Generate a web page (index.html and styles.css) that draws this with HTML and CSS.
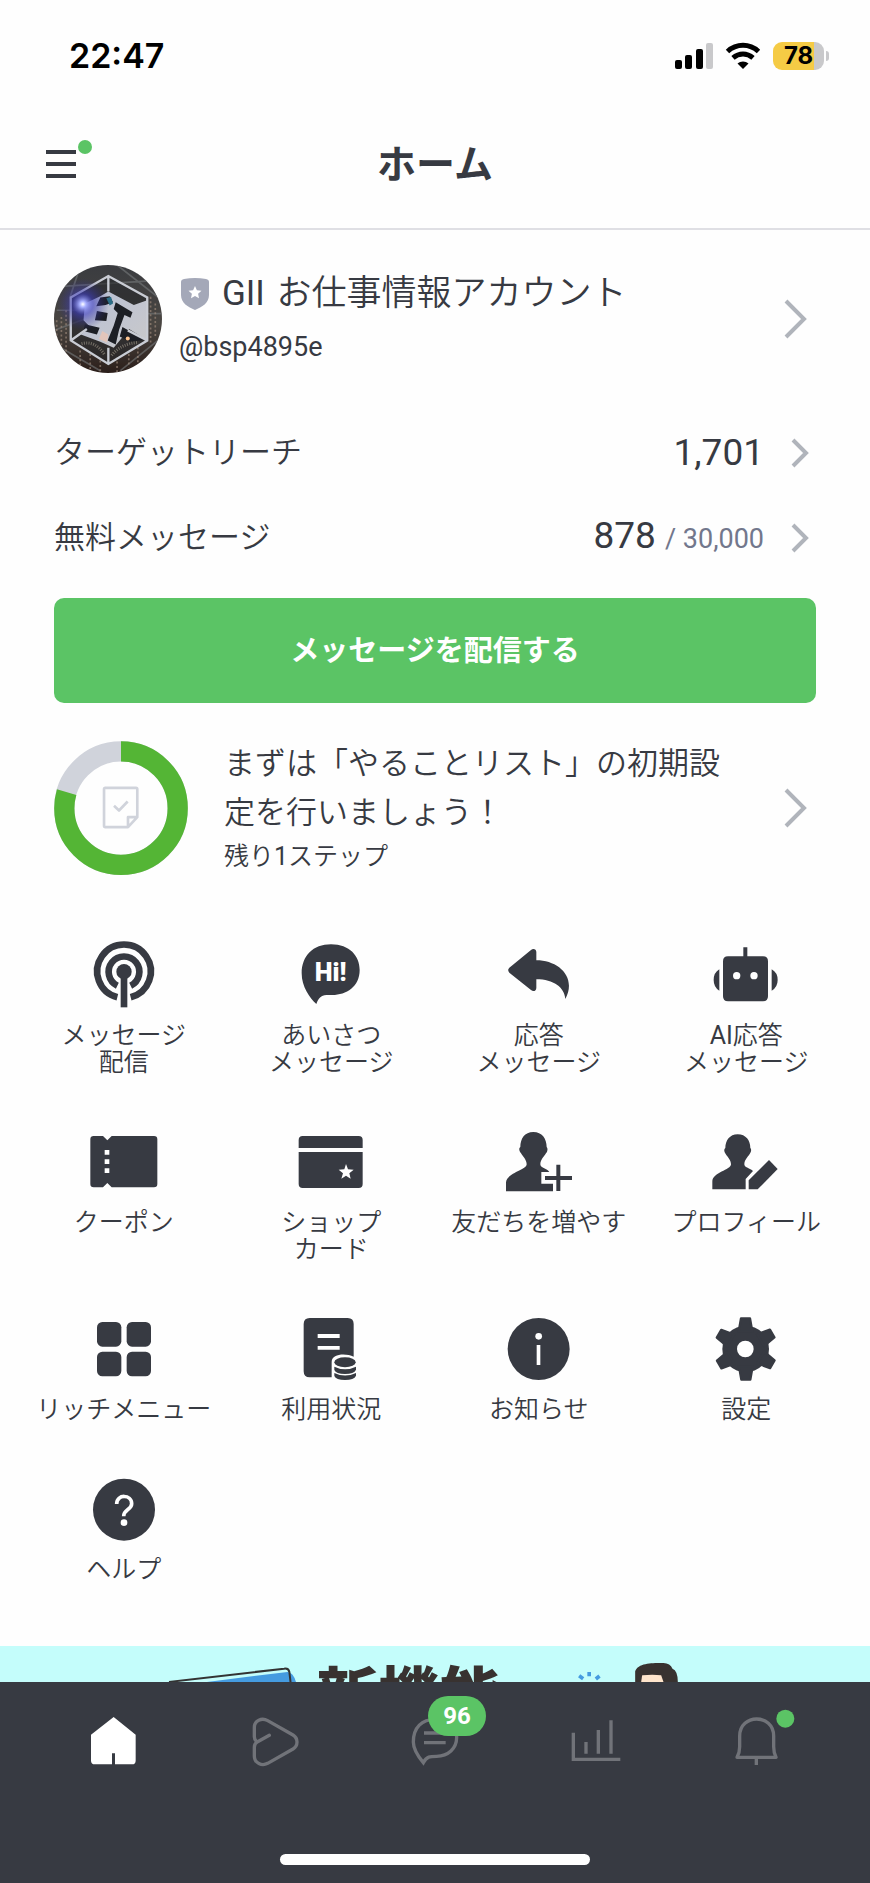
FILE: index.html
```html
<!DOCTYPE html>
<html lang="ja">
<head>
<meta charset="utf-8">
<meta name="viewport" content="width=device-width, initial-scale=1">
<title>ホーム</title>
<link rel="stylesheet" href="styles.css">
</head>
<body>
<div class="app">
  <div class="status">
    <time class="status-time">22:47</time>
    <div class="status-icons">
      <svg class="signal" viewBox="0 0 38 26" aria-label="電波"><rect x="0" y="17" width="7" height="9" rx="2"/><rect x="10" y="12" width="7" height="14" rx="2"/><rect x="21" y="6" width="7" height="20" rx="2"/><rect class="off" x="31" y="0" width="7" height="26" rx="2"/></svg>
      <svg class="wifi" viewBox="0 0 36 26" aria-label="Wi-Fi"><path d="M2.500 8.500C11.500 .3 24.500 .3 33.500 8.500M8 14.800C14 9.600 22 9.600 28 14.800"/><path class="solid" d="M18 26L12.500 20.500C15.500 17.800 20.500 17.800 23.500 20.500Z"/></svg>
      <span class="battery"><span class="battery-body">78</span><span class="battery-tip"></span></span>
    </div>
  </div>

  <header class="header">
    <button class="menu" type="button" aria-label="メニュー">
      <svg viewBox="0 0 48 44"><path class="bars" d="M0 9h30M0 21h30M0 33h30"/><circle class="dot" cx="39" cy="4" r="7"/></svg>
    </button>
    <h1 class="title">ホーム</h1>
  </header>

  <main class="main">
    <a class="profile" href="#account">
      <svg class="avatar" viewBox="12 15 322 322" aria-hidden="true">
        <defs>
          <clipPath id="round"><circle cx="173" cy="176" r="161"/></clipPath>
          <linearGradient id="city" x1="0" y1="0" x2="0" y2="1"><stop offset="0" stop-color="#3a3c40"/><stop offset=".55" stop-color="#4a4642"/><stop offset="1" stop-color="#2c1f1b"/></linearGradient>
          <radialGradient id="flare"><stop offset="0" stop-color="#fff"/><stop offset=".12" stop-color="#a8b0ff"/><stop offset=".4" stop-color="#3f3ec0" stop-opacity=".6"/><stop offset="1" stop-color="#2c2a80" stop-opacity="0"/></radialGradient>
          <linearGradient id="metal" x1="0" y1="0" x2="1" y2="1"><stop offset="0" stop-color="#b9c0d6"/><stop offset="1" stop-color="#c9c9ca"/></linearGradient>
        </defs>
        <g clip-path="url(#round)">
          <rect x="12" y="15" width="322" height="322" fill="url(#city)"/>
          <path d="M12 80L334 60M12 210L120 170M200 15L334 120M12 250L150 330M210 330L334 230M20 150H80M290 160H334M90 20L60 110M250 30L330 90" stroke="#77797b" stroke-width="5" fill="none" opacity=".6"/>
          <path d="M20 180V240M34 170V260M48 150V280M300 110V250M314 130V230M120 280V337M150 300V337M200 290V337M235 280V320M262 260V310M90 270V320" stroke="#9a8678" stroke-width="5" stroke-dasharray="6 7" opacity=".7"/>
          <path d="M62 112L174 48L290 112L290 240L174 310L62 240Z" fill="#26282c" opacity=".6"/>
          <path d="M104 130L150 108L174 94L250 134L290 120V240L236 206L208 240L190 262L150 244L92 222L120 200L100 180Z" fill="url(#metal)"/>
          <path d="M196 126L246 156L240 172L222 164L206 208L196 252L172 240L190 196L202 158L190 146ZM140 152L172 158L168 182L134 180ZM150 112L178 108L188 126L166 134L138 138ZM104 192L148 202L140 222L100 212ZM216 200L284 238L240 244L208 228Z" fill="#1d1f25"/>
          <path d="M156 212L174 222L170 246L146 236Z" fill="#e2c5bb"/>
          <path d="M168 114L182 110L188 130L178 136Z" fill="#2c6d86"/>
          <path d="M62 112L174 48L290 112L290 240L174 310L62 240ZM174 48V94M174 262V310M62 240L110 206M290 240L232 210" fill="none" stroke="#c9ccd4" stroke-width="7"/>
          <path d="M94 250Q134 238 164 284M184 284Q214 248 264 246" fill="none" stroke="#757067" stroke-width="9" stroke-dasharray="3 4"/>
          <circle cx="98" cy="132" r="78" fill="url(#flare)"/>
          <circle cx="232" cy="234" r="6" fill="#ffc692"/>
        </g>
      </svg>
      <span class="profile-text">
        <span class="profile-name">
          <svg class="shield" viewBox="0 0 28 32" aria-label="認証バッジ"><path fill="#a4a8b8" d="M3 1Q14-1 25 1Q28 1.500 28 4V17C28 25 21 29 14 32C7 29 0 25 0 17V4Q0 1.500 3 1Z"/><path fill="#fff" d="M14 8l1.900 4.200 4.600.5-3.400 3.100.9 4.500-4-2.300-4 2.300.9-4.500-3.400-3.100 4.600-.5Z"/></svg>
          <span>GII <span class="kana name-kana">お仕事情報アカウント</span></span>
        </span>
        <span class="profile-id">@bsp4895e</span>
      </span>
      <svg class="chevron" viewBox="0 0 24 40" aria-hidden="true"><path d="M2 2L20 20L2 38"/></svg>
    </a>

    <a class="stat" href="#reach"><span class="stat-label kana">ターゲットリーチ</span><span class="stat-value">1,701</span><svg class="chevron-small" viewBox="0 0 18 30" aria-hidden="true"><path d="M2 2L15 15L2 28"/></svg></a>
    <a class="stat" href="#messages"><span class="stat-label kana">無料メッセージ</span><span class="stat-value">878 <span class="stat-limit">/ 30,000</span></span><svg class="chevron-small" viewBox="0 0 18 30" aria-hidden="true"><path d="M2 2L15 15L2 28"/></svg></a>

    <button class="send" type="button">メッセージを配信する</button>

    <a class="setup" href="#todo">
      <svg class="ring" viewBox="70 451 402 403" aria-hidden="true">
        <circle cx="271" cy="653" r="170.500" fill="none" stroke="#d0d3db" stroke-width="61"/>
        <circle cx="271" cy="653" r="170.500" fill="none" stroke="#54b535" stroke-width="61" pathLength="100" stroke-dasharray="79.500 100" transform="rotate(-90 271 653)"/>
        <path d="M224 592H316Q320 592 320 596V680L292 710H224Q220 710 220 706V596Q220 592 224 592ZM292 710V680H320M250 646L265 660L291 633" fill="none" stroke="#d0d3db" stroke-width="8" stroke-linejoin="round"/>
      </svg>
      <span class="setup-text kana"><span class="setup-title">まずは「やることリスト」の初期設定を行いましょう！</span><span class="setup-rest">残り<span class="latin">1</span>ステップ</span></span>
      <svg class="chevron" viewBox="0 0 24 40" aria-hidden="true"><path d="M2 2L20 20L2 38"/></svg>
    </a>

    <nav class="grid kana" aria-label="機能">
      <a class="tile" href="#broadcast">
        <svg viewBox="203 54 216 216"><g fill="none" stroke="#373a42"><path stroke-width="20" d="M291 232A80.500 80.500 0 1 1 331 232"/><path stroke-width="20" d="M291 197A46 46 0 1 1 331 197"/><path stroke-width="20" d="M311 155V262"/></g><circle cx="311" cy="155" r="23"/></svg>
        <span>メッセージ<br>配信</span></a>
      <a class="tile" href="#greeting">
        <svg viewBox="826 54 216 216"><path d="M934 73C990 73 1020 108 1020 150C1020 200 980 225 938 225H920C904 225 896 236 890 252C870 234 846 200 846 160C846 108 880 73 934 73Z"/><text class="hi" x="933" y="182" text-anchor="middle">Hi!</text></svg>
        <span>あいさつ<br>メッセージ</span></a>
      <a class="tile" href="#reply">
        <svg viewBox="218 54 216 216"><path d="M302 90C309 84 318 88 318 96V121C385 121 440 172 405 237C402 202 370 178 318 178V203C318 213 309 216 302 210L237 158Q230 150 237 143Z"/></svg>
        <span>応答<br>メッセージ</span></a>
      <a class="tile" href="#ai">
        <svg viewBox="841 54 216 216"><path d="M941 82H953V109H1000Q1015 109 1015 124V229Q1015 244 1000 244H895Q880 244 880 229V124Q880 109 895 109H941ZM869 148Q852 158 852 180T869 212ZM1026 148Q1044 158 1044 180T1026 212Z"/><g fill="#fff"><circle cx="921" cy="167" r="11"/><circle cx="973" cy="167" r="11"/></g></svg>
        <span><span class="latin">AI</span>応答<br>メッセージ</span></a>
      <a class="tile" href="#coupon">
        <svg viewBox="203 615 216 216"><path d="M220 648H248L261 661L274 648H401Q411 648 411 658V792Q411 802 401 802H274L261 789L248 802H220Q210 802 210 792V658Q210 648 220 648Z"/><path fill="#fff" d="M253 690h14v14h-14zM253 718h14v14h-14zM253 745h14v14h-14z"/></svg>
        <span>クーポン</span></a>
      <a class="tile" href="#card">
        <svg viewBox="826 615 216 216"><path d="M837 684V660Q837 648 849 648H1017Q1029 648 1029 660V684ZM837 696H1029V792Q1029 804 1017 804H849Q837 804 837 792Z"/><path fill="#fff" d="M979 732L985 748L1002 749L989 760L993 776L979 767L965 776L970 760L957 749L974 748Z"/></svg>
        <span>ショップ<br>カード</span></a>
      <a class="tile" href="#friends">
        <svg viewBox="218 615 216 216"><path d="M309 636C335 636 349 656 349 681C353 684 352 694 347 700C341 709 330 720 330 733C330 744 348 744 357 756H333V791H368V814H227V788C227 760 289 750 289 733C289 720 278 709 272 700C266 694 265 684 270 681C270 656 283 636 309 636Z"/><path d="M378 734h12v34h35v12h-35v33h-12v-33h-34v-12h34z"/></svg>
        <span>友だちを増やす</span></a>
      <a class="tile" href="#profile">
        <svg viewBox="841 615 216 216"><path d="M924 643C949 643 962 662 962 684C966 687 965 696 960 702C954 711 944 720 944 733C944 743 958 743 970 753L948 777V808H848V784C848 758 904 750 904 733C904 720 894 711 888 702C883 696 882 687 887 684C887 662 900 643 924 643Z"/><path d="M1018 720L1044 747L984 808H957V781Z"/></svg>
        <span>プロフィール</span></a>
      <a class="tile" href="#richmenu">
        <svg viewBox="203 66 216 216"><rect x="230" y="96" width="73" height="74" rx="16"/><rect x="319" y="96" width="73" height="74" rx="16"/><rect x="230" y="185" width="73" height="74" rx="16"/><rect x="319" y="185" width="73" height="74" rx="16"/></svg>
        <span>リッチメニュー</span></a>
      <a class="tile" href="#usage">
        <svg viewBox="826 66 216 216"><path d="M870 84H984Q1002 84 1002 102V200C980 190 936 190 936 216V262H870Q852 262 852 244V102Q852 84 870 84Z"/><path fill="#fff" d="M894 132h66v12h-66zM894 168h66v11h-66z"/><ellipse cx="976" cy="217" rx="32" ry="15"/><path d="M944 230Q976 246 1009 230V239Q1003 252 976 252T944 240ZM944 249Q976 264 1009 249V257Q1003 270 976 270T944 258Z"/></svg>
        <span>利用状況</span></a>
      <a class="tile" href="#news">
        <svg viewBox="218 66 216 216"><circle cx="325" cy="177" r="93"/><g fill="#fff"><circle cx="325" cy="139" r="10"/><path d="M319 165h11v60h-11z"/></g></svg>
        <span>お知らせ</span></a>
      <a class="tile" href="#settings">
        <svg viewBox="841 66 216 216"><circle cx="948" cy="177" r="70"/><g stroke="#373a42" stroke-width="7" stroke-linejoin="round"><path id="tooth" d="M934 85H961L968 125H927Z"/><use href="#tooth" transform="rotate(60 948 177)"/><use href="#tooth" transform="rotate(120 948 177)"/><use href="#tooth" transform="rotate(180 948 177)"/><use href="#tooth" transform="rotate(240 948 177)"/><use href="#tooth" transform="rotate(300 948 177)"/></g><circle cx="947" cy="177" r="25" fill="#fff"/></svg>
        <span>設定</span></a>
      <a class="tile" href="#help">
        <svg viewBox="203 546 216 216"><circle cx="311" cy="659" r="93"/><path d="M289 642C289 611 334 613 334 641C334 660 310 657 310 679" fill="none" stroke="#fff" stroke-width="11"/><circle cx="311" cy="698" r="10" fill="#fff"/></svg>
        <span>ヘルプ</span></a>
    </nav>
  </main>

  <a class="banner" href="#new">
    <svg class="banner-art banner-card" viewBox="500 48 400 108" aria-hidden="true"><path fill="#459be0" d="M620 156L862 126Q880 128 888 156Z"/><path d="M506 156L852 116Q866 114 868 126L872 160" fill="none" stroke="#333" stroke-width="6"/></svg>
    <span class="banner-text">新機能</span>
    <svg class="banner-art banner-person" viewBox="420 48 320 108" aria-hidden="true"><path d="M429 137l12 9M459 126v13M490 138l-11 9" stroke="#459be0" stroke-width="11" fill="none"/><path fill="#383230" d="M597 156V124C606 98 650 99 682 99Q702 100 709 116Q725 122 725 156Z"/><path fill="#ffe5cc" d="M615 156L618 136Q650 132 675 136L682 156Z"/></svg>
  </a>

  <footer class="footer">
    <nav class="tabs" aria-label="タブ">
      <a class="tab" href="#home" aria-label="ホーム" aria-current="page"><svg viewBox="250 243 180 180"><path fill="#fff" d="M342 261L408 314V392Q408 403 397 403H346V370H337V403H286Q274 403 274 392V314Z"/></svg></a>
      <a class="tab" href="#voom" aria-label="VOOM"><svg class="line" viewBox="733 243 180 180"><path d="M809 316L774 335Q764 341 764 352V378C764 400 787 409 804 400L880 357C896 347 896 325 880 315L804 272C786 262 764 272 764 292V320Q764 328 770 334" stroke-linecap="round"/></svg></a>
      <a class="tab" href="#chat" aria-label="チャット"><svg class="line" viewBox="1215 243 180 180"><path d="M1270 398C1255 380 1240 360 1240 336C1240 292 1266 268 1306 268C1350 268 1370 296 1370 322C1370 356 1344 379 1310 379C1290 379 1280 379 1270 398ZM1272 309H1340M1272 338H1337"/></svg><span class="badge">96</span></a>
      <a class="tab" href="#stats" aria-label="分析"><svg class="line" viewBox="392 243 180 180"><path d="M414 308V388H555M452 336V371M489 300V371M527 271V371"/></svg></a>
      <a class="tab" href="#alerts" aria-label="通知"><svg class="line" viewBox="875 243 180 180"><path stroke-linejoin="round" d="M905 382Q913 368 913 350V318C913 250 1015 250 1015 318V350Q1015 368 1022 382ZM963 383V405"/><circle class="dot" cx="1050" cy="266" r="27"/></svg></a>
    </nav>
    <div class="home-bar"></div>
  </footer>
</div>
</body>
</html>
```

FILE: styles.css
```css
* { box-sizing: border-box; }

body {
  margin: 0;
  background: #fefefe;
  color: #373a42;
  font-family: Roboto, "Noto Sans CJK JP", sans-serif;
}

a { color: inherit; text-decoration: none; }
button { border: 0; padding: 0; background: none; font-family: inherit; color: inherit; }
svg { display: block; overflow: visible; flex: none; }

.app { display: flex; flex-direction: column; min-height: 100vh; }
.kana { font-weight: 350; }
.latin { font-weight: 400; }
.dot { fill: #5bc465; stroke: none; }

.status {
  display: flex;
  justify-content: space-between;
  align-items: center;
  height: 102px;
  padding: 9px 41px 0 69px;
  color: #000;
}
.status-time { font: 600 34px/40px Inter, sans-serif; }
.status-icons { display: flex; align-items: center; gap: 12px; }
.signal { width: 38px; height: 26px; }
.signal .off { fill: #c9c9cb; }
.wifi { width: 36px; height: 26px; fill: none; stroke: #000; stroke-width: 5; }
.wifi .solid { fill: #000; stroke: none; }
.battery { display: flex; align-items: center; gap: 2px; }
.battery-body {
  width: 51px;
  border-radius: 9px;
  background: linear-gradient(90deg, #f5cb45 80%, #c9c9cb 80%);
  font: 700 24px/28px Inter, sans-serif;
  text-align: center;
}
.battery-tip { width: 3px; height: 10px; border-radius: 0 3px 3px 0; background: #c9c9cb; }

.header {
  display: grid;
  grid-template-columns: 1fr auto 1fr;
  align-items: center;
  height: 128px;
  padding: 0 46px;
  border-bottom: 2px solid #dfdfe4;
}
.menu { justify-self: start; }
.menu svg { width: 48px; height: 44px; }
.bars { stroke: #373a42; stroke-width: 4; }
.title { margin: 0; font-size: 39px; line-height: 48px; font-weight: 700; }

.main { flex: 1; padding-bottom: 63px; }

.profile { display: flex; align-items: center; padding: 35px 62px 37px 54px; }
.avatar { width: 108px; height: 108px; margin-right: 17px; }
.profile-text { display: flex; flex-direction: column; flex: 1; gap: 11px; padding-bottom: 4px; }
.profile-name { display: flex; align-items: center; gap: 13px; padding-left: 2px; font-size: 35px; line-height: 48px; }
.name-kana { margin-left: 3px; }
.shield { width: 28px; height: 32px; }
.profile-id { font-size: 27px; line-height: 36px; }
.chevron, .chevron-small { fill: none; stroke: #b0b4bb; stroke-width: 4; }
.chevron { width: 24px; height: 40px; }
.chevron-small { width: 18px; height: 30px; margin-left: 27px; }

.stat { display: flex; align-items: center; height: 85px; padding: 0 61px 0 54px; }
.stat-label { flex: 1; font-size: 31px; line-height: 40px; }
.stat-value { font-size: 37px; line-height: 44px; }
.stat-limit { font-size: 27px; color: #72778c; }

.send {
  display: block;
  width: calc(100% - 108px);
  height: 105px;
  margin: 18px 54px 36px;
  padding-bottom: 6px;
  border-radius: 10px;
  background: #5bc465;
  color: #fff;
  font-size: 29px;
  font-weight: 700;
}

.setup { display: flex; align-items: center; padding: 0 62px 0 54px; margin-bottom: 61px; }
.ring { width: 134px; height: 134px; margin-right: 36px; }
.setup-text { display: flex; flex-direction: column; flex: 1; gap: 2px; padding: 0 50px 2px 0; }
.setup-title { font-size: 31px; line-height: 49px; }
.setup-rest { font-size: 25px; line-height: 36px; }

.grid {
  display: grid;
  grid-template-columns: repeat(4, 1fr);
  row-gap: 49px;
  padding: 0 20px;
}
.tile {
  display: flex;
  flex-direction: column;
  align-items: center;
  gap: 12px;
  font-size: 25px;
  line-height: 27px;
  text-align: center;
  white-space: nowrap;
}
.tile svg { width: 72px; height: 72px; fill: #373a42; }
.tile .hi { fill: #fff; font-size: 76px; font-weight: 900; }

.banner {
  display: flex;
  justify-content: center;
  align-items: flex-start;
  height: 36px;
  padding-right: 20px;
  overflow: hidden;
  background: #c4fdfb;
}
.banner-art { height: 36px; }
.banner-card { width: 133px; }
.banner-person { width: 107px; }
.banner-text {
  padding: 0 74px 0 16px;
  color: #383230;
  font-size: 62px;
  line-height: 104px;
  font-weight: 900;
}

.footer {
  display: flex;
  flex-direction: column;
  justify-content: space-between;
  align-items: center;
  height: 201px;
  padding: 29px 33px 18px;
  background: #373a42;
}
.tabs { display: grid; grid-template-columns: repeat(5, 1fr); width: 100%; }
.tab { position: relative; display: flex; justify-content: center; }
.tab svg { width: 60px; height: 60px; }
.line { fill: none; stroke: #717379; stroke-width: 10; }
.badge {
  position: absolute;
  top: -15px;
  left: calc(50% - 7px);
  width: 58px;
  border-radius: 20px;
  background: #5bc465;
  color: #fff;
  font-size: 24px;
  font-weight: 700;
  line-height: 40px;
  text-align: center;
}
.home-bar { width: 310px; height: 11px; border-radius: 6px; background: #fff; }
```
